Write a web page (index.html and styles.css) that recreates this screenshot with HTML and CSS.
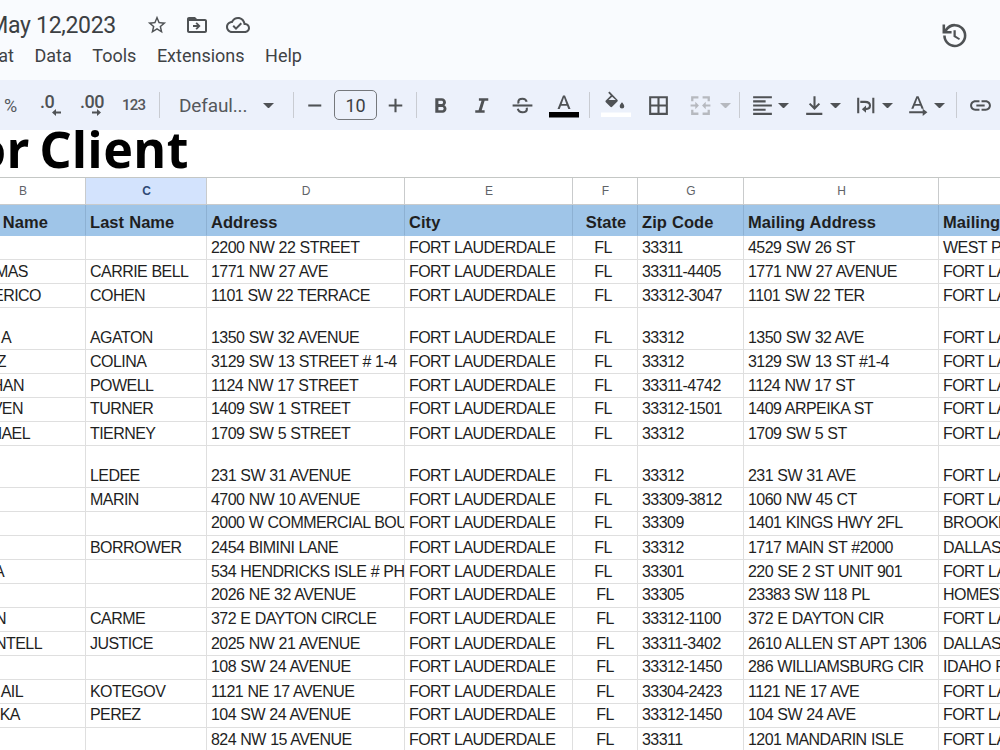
FILE: index.html
```
<!DOCTYPE html>
<html lang="en">
<head>
    <meta charset="UTF-8">
    <meta name="viewport" content="width=device-width, initial-scale=1.0">
    <title>May 12,2023</title>
    <link rel="stylesheet" href="styles.css">
</head>
<body>

    <header class="header">
        <div class="header-main">
            <div class="title-row">
                <div class="doc-title"><span>May 12,2023</span></div>
                <svg class="title-icon star" viewBox="0 0 24 24"><path d="M22 9.24l-7.19-.62L12 2 9.19 8.63 2 9.24l5.46 4.73L5.82 21 12 17.27 18.18 21l-1.63-7.03L22 9.24zM12 15.4l-3.76 2.27 1-4.28-3.32-2.88 4.38-.38L12 6.1l1.71 4.04 4.38.38-3.32 2.88 1 4.28L12 15.4z"/></svg>
                <svg class="title-icon folder" viewBox="0 0 24 24"><path d="M20 6h-8l-2-2H4c-1.1 0-2 .9-2 2v12c0 1.1.9 2 2 2h16c1.1 0 2-.9 2-2V8c0-1.1-.9-2-2-2zm0 12H4V8h16v10zm-8.2-1.2L15.6 13l-3.8-3.800-1.300 1.300 1.600 1.600H8v1.800h4.100l-1.600 1.600z"/></svg>
                <svg class="title-icon cloud" viewBox="0 0 24 24"><path d="M19.350 10.040C18.670 6.590 15.640 4 12 4 9.110 4 6.610 5.640 5.350 8.040 2.340 8.360 0 10.910 0 14c0 3.310 2.690 6 6 6h13c2.760 0 5-2.240 5-5 0-2.640-2.050-4.780-4.650-4.960zM19 18H6c-2.210 0-4-1.790-4-4 0-2.050 1.530-3.760 3.560-3.970l1.070-.11.500-.95C8.080 7.140 9.940 6 12 6c2.620 0 4.880 1.860 5.390 4.430l.3 1.500 1.530.11C20.780 12.140 22 13.450 22 15c0 1.650-1.350 3-3 3zm-9-3.820l-2.090-2.090L6.500 13.500 10 17l6.010-6.010-1.410-1.410z"/></svg>
            </div>
            <nav class="menu">
                <div class="menu-cut"><span>at</span></div>
                <span>Data</span>
                <span>Tools</span>
                <span>Extensions</span>
                <span>Help</span>
            </nav>
        </div>
        <svg class="history" viewBox="0 0 24 24"><path d="M13 3a9 9 0 0 0-7.500 4V3.500H3.500V10.500h7v-2H7A7 7 0 1 1 6 12H4a9 9 0 1 0 9-9zm-1 5v5l4.280 2.540.77-1.280-3.300-2.010V8z"/></svg>
    </header>

    <div class="toolbar">
        <span class="tool-text percent">%</span>
        <svg class="icon" viewBox="0 0 25 25"><text class="decimal" x="1" y="14.500">.0</text><path d="M22 18.600h-5v-2.600l-4 3.500 4 3.500v-2.600h5z"/></svg>
        <svg class="icon" viewBox="0 0 25 25"><text class="decimal" x="0" y="14.500">.00</text><path d="M12 18.600h5v-2.600l4 3.500-4 3.500v-2.600h-5z"/></svg>
        <span class="tool-text digits">123</span>
        <i class="sep"></i>
        <span class="font-name">Defaul...</span>
        <i class="caret"></i>
        <i class="sep"></i>
        <svg class="icon" viewBox="0 0 24 24"><path d="M6 11h12.500v2H6z"/></svg>
        <span class="font-size">10</span>
        <svg class="icon" viewBox="0 0 24 24"><path d="M18 13h-5v5.500h-2V13H5.500v-2H11V5.500h2V11h5.500v2z"/></svg>
        <i class="sep"></i>
        <svg class="icon" viewBox="0 0 24 24"><path d="M15.600 11.790c.97-.67 1.650-1.770 1.650-2.790 0-2.260-1.750-4-4-4H7v14h7.040c2.090 0 3.710-1.700 3.710-3.790 0-1.520-.86-2.820-2.150-3.420zM10 7.500h3c.83 0 1.500.67 1.500 1.500s-.67 1.500-1.500 1.500h-3v-3zm3.500 9H10v-3h3.500c.83 0 1.500.67 1.500 1.500s-.67 1.500-1.500 1.500z"/></svg>
        <svg class="icon" viewBox="0 0 24 24"><path d="M9.500 5v2.500h2.500l-2.800 9H6V19h9v-2.500h-2.800l2.800-9H18.500V5z"/></svg>
        <svg class="icon" viewBox="0 0 24 24"><path d="M2.500 11h19v2h-19z"/><path class="line" d="M16 8.500C15.500 6.500 14 5.500 12 5.500S8 6.600 8 8.700c0 .5.100.9.300 1.300M7.500 15.200c.5 2.200 2.200 3.300 4.500 3.300s4.200-1.100 4.200-3.200c0-.5-.1-.8-.2-1.100"/></svg>
        <svg class="icon wide" viewBox="0 0 30 30"><path d="M14 5.500L8.500 19h2.200l1.300-3.300h6l1.300 3.300h2.200L16 5.500zm-1.300 8.400L15 7.500l2.300 6.400z"/><path class="black" d="M0 22h30v5.500H0z"/></svg>
        <i class="sep"></i>
        <svg class="icon wide" viewBox="0 0 30 30"><path d="M8.500 1.500L7.200 2.800l2.600 2.700-5 5c-.5.500-.5 1.200 0 1.700l4.600 4.600c.5.500 1.200.5 1.700 0l5.300-5.300c.5-.5.500-1.200 0-1.700zm2.600 5.300L14.800 10H7.600zM21 12.300s-2.300 2.500-2.300 4a2.300 2.300 0 0 0 4.600 0c0-1.500-2.300-4-2.300-4z"/><path class="white" d="M0 22.500h30v4.500H0z"/></svg>
        <svg class="icon" viewBox="0 0 24 24"><path d="M3 3v18h18V3H3zm8 16H5v-6h6v6zm0-8H5V5h6v6zm8 8h-6v-6h6v6zm0-8h-6V5h6v6z"/></svg>
        <svg class="icon disabled" viewBox="0 0 24 24"><path d="M3 3h7v2.200H5.200V8H3zM14 3h7v5h-2.200V5.200H14zM3 16h2.200v2.800H10V21H3zM18.800 16H21v5h-7v-2.200h4.800zM2.500 11H7V8.500l3.500 3.500L7 15.500V13H2.500zM21.500 11H17V8.500L13.500 12l3.500 3.500V13h4.500z"/></svg>
        <i class="caret disabled"></i>
        <i class="sep"></i>
        <svg class="icon" viewBox="0 0 24 24"><path d="M3 3h18v2H3zM3 7h12v2H3zM3 11h18v2H3zM3 15h12v2H3zM3 19h18v2H3z"/></svg>
        <i class="caret"></i>
        <svg class="icon" viewBox="0 0 24 24"><path d="M11 3h2v9.500l3-3 1.400 1.400L12 16.300l-5.400-5.400L8 9.500l3 3zM4 19h15.500v2H4z"/></svg>
        <i class="caret"></i>
        <svg class="icon" viewBox="0 0 24 24"><path d="M4 4.500h2v15H4zM18.500 4.500h2v15h-2z"/><path class="line" d="M7 8.500h4.500c3.200 0 4.800 1.500 4.800 3.600s-1.500 3.400-4.300 3.400h-1"/><path d="M12.500 12v7L8.500 15.500z"/></svg>
        <i class="caret"></i>
        <svg class="icon" viewBox="0 0 24 24"><path d="M11 3L6 15h2.100l1.100-2.800h5.600l1.100 2.800H18L13 3zM9.900 10.500L12 5l2.100 5.500zM4 17.500h13V15l4.500 3.500L17 22v-2.500H4z"/></svg>
        <i class="caret"></i>
        <i class="sep"></i>
        <svg class="icon" viewBox="0 0 24 24"><path d="M3.900 12c0-1.710 1.390-3.100 3.100-3.100h4V7H7c-2.760 0-5 2.240-5 5s2.240 5 5 5h4v-1.900H7c-1.710 0-3.100-1.390-3.100-3.100zM8 13h8v-2H8v2zm9-6h-4v1.900h4c1.710 0 3.100 1.390 3.100 3.100s-1.390 3.100-3.100 3.100h-4V17h4c2.760 0 5-2.240 5-5s-2.240-5-5-5z"/></svg>
    </div>

    <div class="banner"><h1>or Client</h1></div>

    <div class="sheet" id="sheet">
        <div class="row letters">
            <div class="cell">B</div>
            <div class="cell selected">C</div>
            <div class="cell">D</div>
            <div class="cell">E</div>
            <div class="cell">F</div>
            <div class="cell">G</div>
            <div class="cell">H</div>
            <div class="cell"></div>
        </div>
        <div class="row heading">
            <div class="cell first"><span style="margin-right: 37px">Name</span></div>
            <div class="cell">Last Name</div>
            <div class="cell">Address</div>
            <div class="cell">City</div>
            <div class="cell state">State</div>
            <div class="cell">Zip Code</div>
            <div class="cell">Mailing Address</div>
            <div class="cell">Mailing</div>
        </div>
    </div>

    <script src="script.js"></script>
</body>
</html>
```

FILE: styles.css
```
:root {
    --icon-color: #4f5255;
    --chrome-bg: #f9fbfe;
    --toolbar-bg: #ecf1fb;
    --grid-line: #dfdfdf;
    --heading-bg: #9fc5e8;
}

* {
    box-sizing: border-box;
}

body {
    margin: 0;
    width: 1000px;
    height: 750px;
    overflow: hidden;
    background-color: #fff;
    font-family: Roboto, "Liberation Sans", sans-serif;
    color: #1f1f1f;
}

svg {
    display: block;
    fill: var(--icon-color);
}

/* title and menu */
.header {
    display: flex;
    justify-content: space-between;
    height: 80px;
    padding-right: 31px;
    background-color: var(--chrome-bg);
}

.title-row {
    display: flex;
    align-items: center;
    height: 45px;
    padding-top: 5px;
}

.doc-title {
    display: flex;
    justify-content: flex-end;
    width: 116px;
    overflow: hidden;
    white-space: nowrap;
    font-size: 23px;
    letter-spacing: -0.3px;
    color: #3c4043;
}

.title-icon {
    width: 22px;
    height: 22px;
}

.title-icon.star {
    margin-left: 30px;
}

.title-icon.folder {
    margin-left: 17px;
    width: 24px;
    height: 24px;
}

.title-icon.cloud {
    margin-left: 17px;
    width: 24px;
    height: 24px;
}

.menu {
    display: flex;
    align-items: center;
    gap: 20.5px;
    height: 21px;
    font-size: 18px;
    color: #3f4245;
}

.menu-cut {
    display: flex;
    justify-content: flex-end;
    width: 14px;
    overflow: hidden;
}

.history {
    width: 31px;
    height: 31px;
    margin-top: 20px;
}

/* toolbar: every column starts at the left edge of its tool */
.toolbar {
    display: grid;
    grid-template-columns: 35px 41px 42px 37px 20px 84px 30px 9px 32px 49px 33px 12px 41px 41px 39px 40px 12px 45px 42px 32px 19px 11px 28px 24px 28px 23px 29px 23px 29px 22px 12px 32px;
    align-items: center;
    height: 50px;
    padding-left: 4px;
    background-color: var(--toolbar-bg);
}

.icon {
    width: 25px;
    height: 25px;
}

.icon.wide {
    width: 30px;
    height: 30px;
}

.icon .line {
    fill: none;
    stroke: var(--icon-color);
    stroke-width: 2;
}

.icon .black {
    fill: #000;
}

.icon .white {
    fill: #fff;
}

.icon.disabled {
    fill: #b6b9bf;
}

.decimal {
    font-size: 18px;
    font-weight: 500;
    letter-spacing: -0.5px;
}

.tool-text {
    font-size: 15px;
    color: #55585c;
}

.tool-text.percent {
    font-size: 18px;
}

.tool-text.digits {
    letter-spacing: -0.8px;
    font-weight: 500;
}

.font-name {
    font-size: 19px;
    letter-spacing: -0.15px;
    color: #55585c;
}

.font-size {
    display: flex;
    align-items: center;
    justify-content: center;
    width: 43px;
    height: 30px;
    border: 1px solid #75787c;
    border-radius: 5px;
    font-size: 18px;
    color: #3c4043;
}

.sep {
    width: 1px;
    height: 26px;
    background-color: #c9ccd2;
}

.caret {
    width: 11px;
    border: 5px solid transparent;
    border-top-color: var(--icon-color);
    border-bottom: 0;
}

.caret.disabled {
    border-top-color: #b6b9bf;
}

/* large caption */
.banner {
    display: flex;
    justify-content: flex-end;
    width: 189px;
    height: 47px;
}

.banner h1 {
    margin: -11px 0 0;
    font-family: "Noto Sans", "Open Sans", sans-serif;
    font-size: 50px;
    font-weight: 700;
    line-height: 60px;
    letter-spacing: 0.6px;
    word-spacing: -4px;
    white-space: nowrap;
    color: #000;
}

/* spreadsheet */
.sheet {
    border-top: 1px solid #c4c7c5;
    font-family: "Liberation Sans", Arial, sans-serif;
    font-size: 16px;
    letter-spacing: -0.55px;
    word-spacing: 0.4px;
}

.row {
    display: grid;
    grid-template-columns: 86px 121px 198px 168px 65px 106px 195px 62px;
    height: 24px;
}

.row.tall {
    height: 42px;
}

.cell {
    display: flex;
    align-items: flex-end;
    overflow: hidden;
    padding-left: 4px;
    border-right: 1px solid var(--grid-line);
    border-bottom: 1px solid var(--grid-line);
    line-height: 23px;
    white-space: pre;
}

.row.raised .cell {
    padding-bottom: 1px;
}

.cell.first {
    justify-content: flex-end;
    padding-left: 0;
}

.cell.state {
    justify-content: center;
    padding-left: 0;
}

.row.letters {
    height: 27px;
    font-size: 12px;
    letter-spacing: 0;
    color: #5f6368;
}

.row.letters .cell {
    align-items: center;
    justify-content: center;
    padding-left: 1px;
    border-color: #c9cbcc;
}

/* column B starts left of the window */
.row.letters .cell:first-child {
    margin-left: -40px;
}

.row.letters .selected {
    background-color: #d3e3fd;
    font-weight: 700;
    color: #2f4a75;
}

.row.heading {
    height: 31px;
    background-color: var(--heading-bg);
    font-size: 16.500px;
    font-weight: 700;
    letter-spacing: 0.05px;
}

.row.heading .cell {
    align-items: center;
    border-right-color: #8db1d3;
    border-bottom-color: var(--heading-bg);
    padding-top: 4px;
}

.row.heading .state {
    padding-left: 2px;
}
```

FILE: script.js
```
// first name, its right edge, last name, address, city, state, zip, mailing address, mailing city, row class
const FTL = 'FORT LAUDERDALE';
const rows = [
    ['', 0, '', '2200 NW 22 STREET', FTL, 'FL ', '33311', '4529 SW 26 ST', 'WEST PA', ''],
    ['MAS', 28, 'CARRIE BELL', '1771 NW 27 AVE', FTL, 'FL ', '33311-4405', '1771 NW 27 AVENUE', 'FORT LA', ''],
    ['ERICO', 41, 'COHEN', '1101 SW 22 TERRACE', FTL, 'FL ', '33312-3047', '1101 SW 22 TER', 'FORT LA', ''],
    ['A', 11, 'AGATON', '1350 SW 32 AVENUE', FTL, 'FL ', '33312', '1350 SW 32 AVE', 'FORT LA', 'tall'],
    ['Z', 6, 'COLINA', '3129 SW 13 STREET # 1-4', FTL, 'FL ', '33312', '3129 SW 13 ST #1-4', 'FORT LA', ''],
    ['HAN', 24, 'POWELL', '1124 NW 17 STREET', FTL, 'FL ', '33311-4742', '1124 NW 17 ST', 'FORT LA', ''],
    ['VEN', 23, 'TURNER', '1409 SW 1 STREET', FTL, 'FL ', '33312-1501', '1409 ARPEIKA ST', 'FORT LA', 'raised'],
    ['HAEL', 30, 'TIERNEY', '1709 SW 5 STREET', FTL, 'FL ', '33312', '1709 SW 5 ST', 'FORT LA', ''],
    ['', 0, 'LEDEE', '231 SW 31 AVENUE', FTL, 'FL ', '33312', '231 SW 31 AVE', 'FORT LA', 'tall'],
    ['', 0, 'MARIN', '4700 NW 10 AVENUE', FTL, 'FL ', '33309-3812', '1060 NW 45 CT', 'FORT LA', ''],
    ['', 0, '', '2000 W COMMERCIAL BOU', FTL, 'FL ', '33309', '1401 KINGS HWY 2FL', 'BROOKL', 'raised'],
    ['', 0, 'BORROWER', '2454 BIMINI LANE', FTL, 'FL ', '33312', '1717 MAIN ST #2000', 'DALLAS', ''],
    ['A', 4, '', '534 HENDRICKS ISLE # PH', FTL, 'FL ', '33301', '220 SE 2 ST UNIT 901', 'FORT LA', ''],
    ['', 0, '', '2026 NE 32 AVENUE', FTL, 'FL', '33305', '23383 SW 118 PL', 'HOMEST', 'raised'],
    ['N', 6, 'CARME', '372 E DAYTON CIRCLE', FTL, 'FL', '33312-1100', '372 E DAYTON CIR', 'FORT LA', 'raised'],
    ['NTELL', 42, 'JUSTICE', '2025 NW 21 AVENUE', FTL, 'FL', '33311-3402', '2610 ALLEN ST APT 1306', 'DALLAS', ''],
    ['', 0, '', '108 SW 24 AVENUE', FTL, 'FL', '33312-1450', '286 WILLIAMSBURG CIR', 'IDAHO F', 'raised'],
    ['AIL', 23, 'KOTEGOV', '1121 NE 17 AVENUE', FTL, 'FL', '33304-2423', '1121 NE 17 AVE', 'FORT LA', ''],
    ['KA', 20, 'PEREZ', '104 SW 24 AVENUE', FTL, 'FL', '33312-1450', '104 SW 24 AVE', 'FORT LA', 'raised'],
    ['', 0, '', '824 NW 15 AVENUE', FTL, 'FL', '33311', '1201 MANDARIN ISLE', 'FORT LA', '']
];

const sheet = document.getElementById('sheet');

rows.forEach(([first, edge, ...rest]) => {
    const rowClass = rest.pop();
    const cells = rest.map((text, i) => `<div class="cell${i === 3 ? ' state' : ''}">${text}</div>`).join('');
    sheet.insertAdjacentHTML('beforeend', `
        <div class="row ${rowClass}">
            <div class="cell first"><span style="margin-right: ${85 - edge}px">${first}</span></div>
            ${cells}
        </div>`);
});
```
